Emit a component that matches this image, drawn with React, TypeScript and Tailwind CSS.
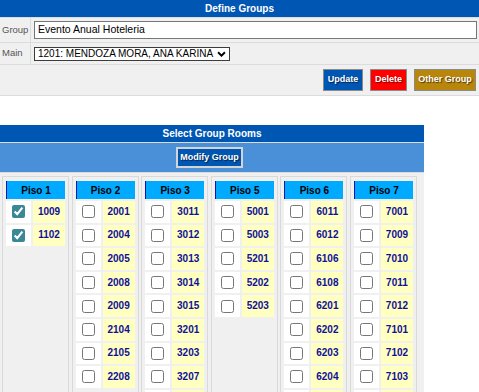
import React from 'react';

type Floor = { piso: string; rooms: string[]; checked?: string[] };

const FLOORS: Floor[] = [
  { piso: 'Piso 1', rooms: ['1009', '1102'], checked: ['1009', '1102'] },
  { piso: 'Piso 2', rooms: ['2001', '2004', '2005', '2008', '2009', '2104', '2105', '2208'] },
  { piso: 'Piso 3', rooms: ['3011', '3012', '3013', '3014', '3015', '3201', '3203', '3207', '3208'] },
  { piso: 'Piso 5', rooms: ['5001', '5003', '5201', '5202', '5203'] },
  { piso: 'Piso 6', rooms: ['6011', '6012', '6106', '6108', '6201', '6202', '6203', '6204', '6205'] },
  { piso: 'Piso 7', rooms: ['7001', '7009', '7010', '7011', '7012', '7101', '7102', '7103', '7104'] },
];

function FloorColumn({ floor }: { floor: Floor }) {
  return (
    <div className="w-[67px] border border-[#d9d9d9] px-[3px] pt-[4px] flex flex-col gap-[2px]">
      <div className="h-[18px] bg-[#00aaff] border-l border-l-[#1414b4] flex items-center justify-center text-[10px] font-bold text-black">
        {floor.piso}
      </div>
      {floor.rooms.map((room) => (
        <div key={room} className="flex gap-[2px] h-[21.6px]">
          <div className="w-[25px] bg-white flex items-center justify-center">
            <input
              type="checkbox"
              defaultChecked={floor.checked?.includes(room)}
              className="w-[13px] h-[13px] m-0 accent-[#3a8795]"
            />
          </div>
          <div className="flex-1 bg-[#ffffc0] flex items-center justify-center pb-[1px] text-[10px] font-bold text-[#10109a]">
            {room}
          </div>
        </div>
      ))}
    </div>
  );
}

export default function App() {
  return (
    <div className="w-[479px] min-h-[392px] bg-white font-['Liberation_Sans',Arial,sans-serif]">
      {/* ── Define Groups ─────────────────────────────── */}
      <div className="bg-[#f0f0f0] border-b border-[#dcdcdc]">
        <div className="h-[17px] bg-[#0056b3] text-white text-[10px] font-bold flex items-center justify-center">
          Define Groups
        </div>
        <div className="flex h-[25px] border-t border-[#dcdcdc]">
          <div className="w-[31px] border-r border-[#dcdcdc] pl-[2px] flex items-center text-[9.5px] text-[#555]">
            Group
          </div>
          <div className="flex-1 flex items-center pl-[3px] pr-[2px]">
            <div className="w-full h-[18px] border border-[#767676] bg-white pl-[3px] flex items-center text-[10.5px] text-black">
              Evento Anual Hoteleria
            </div>
          </div>
        </div>
        <div className="flex h-[22px] border-t border-[#dcdcdc]">
          <div className="w-[31px] border-r border-[#dcdcdc] pl-[2px] flex items-center text-[9.5px] text-[#555]">
            Main
          </div>
          <div className="flex-1 flex items-center pl-[3px]">
            <div className="w-[196px] h-[14px] border border-[#3c3c3c] bg-white pl-[3px] pr-[3px] flex items-center justify-between text-[10px] leading-none text-black">
              <span>1201: MENDOZA MORA, ANA KARINA</span>
              <svg viewBox="0 0 10 7" className="w-[9px] h-[6px]">
                <path d="M1 1.5l4 4 4-4" fill="none" stroke="#000" strokeWidth={2.2} />
              </svg>
            </div>
          </div>
        </div>
        <div className="flex h-[31px] border-t border-[#dcdcdc] items-center justify-end gap-[7px] pr-[3px]">
          <button className="h-[22px] w-[40px] bg-[#0056b3] border border-[#8a8a8a] text-white text-[9px] font-bold [text-shadow:1px_1px_1px_rgba(0,0,0,0.6)]">
            Update
          </button>
          <button className="h-[22px] w-[37px] bg-[#ff0000] border border-[#8a8a8a] text-white text-[9px] font-bold [text-shadow:1px_1px_1px_rgba(0,0,0,0.6)]">
            Delete
          </button>
          <button className="h-[22px] w-[62px] bg-[#b8860b] border border-[#8a8a8a] text-white text-[9px] font-bold [text-shadow:1px_1px_1px_rgba(0,0,0,0.6)]">
            Other Group
          </button>
        </div>
      </div>

      {/* ── Select Group Rooms ────────────────────────── */}
      <div className="mt-[29px] w-[424px] bg-[#f0f0f0]">
        <div className="h-[17px] bg-[#0056b3] text-white text-[10px] font-bold flex items-center justify-center">
          Select Group Rooms
        </div>
        <div className="h-[30px] border-t border-[#dcdcdc] bg-[#4a90d9] flex items-center justify-center">
          <button className="mr-[5px] h-[21px] w-[67px] bg-[#0056b3] border-2 border-[#d4d4d4] text-white text-[9px] font-bold [text-shadow:1px_1px_1px_rgba(0,0,0,0.6)]">
            Modify Group
          </button>
        </div>
        <div className="border-t border-[#dcdcdc] pt-[3px] pl-[2px] flex gap-[2.6px]">
          {FLOORS.map((f) => (
            <FloorColumn key={f.piso} floor={f} />
          ))}
        </div>
      </div>
    </div>
  );
}
